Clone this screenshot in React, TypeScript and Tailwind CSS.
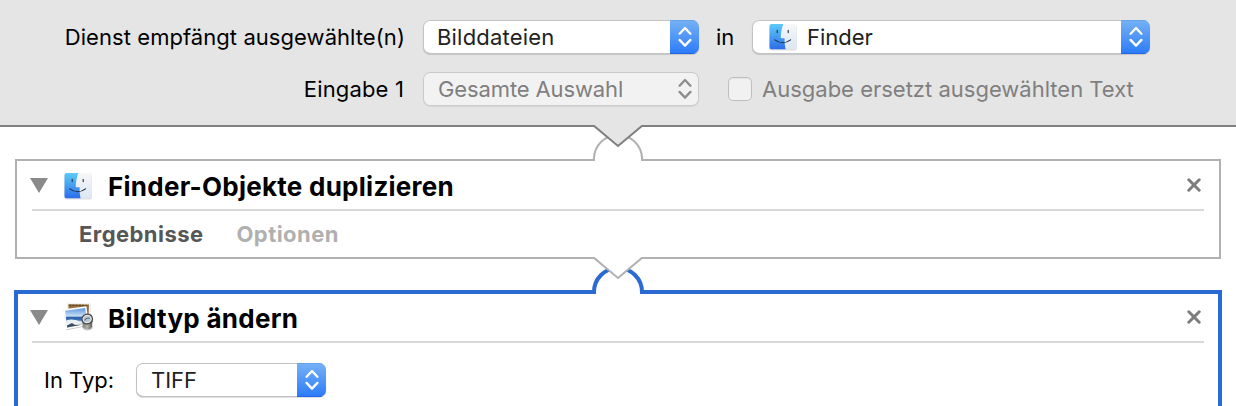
import type { ReactNode } from "react";

function FinderIcon() {
  return (
    <svg width="30" height="28" viewBox="0 0 30 28" className="shrink-0">
      <defs>
        <linearGradient id="finderLeft" x1="0" y1="0" x2="0" y2="1">
          <stop offset="0" stopColor="#5dcbf8" />
          <stop offset="0.5" stopColor="#459df0" />
          <stop offset="1" stopColor="#2c6bea" />
        </linearGradient>
        <linearGradient id="finderRight" x1="0" y1="0" x2="0" y2="1">
          <stop offset="0" stopColor="#f7f7f8" />
          <stop offset="1" stopColor="#dde6f3" />
        </linearGradient>
      </defs>
      <rect x="1.2" y="2" width="27.6" height="25.4" rx="2" fill="#000" opacity="0.13" />
      <rect x="1.5" y="1" width="27" height="25.3" rx="2" fill="url(#finderRight)" />
      <path
        d="M3.5 1H15.3C13.7 5.3 12.9 9.7 12.7 14.6Q12.7 15.2 13.3 15.2H16.6C16.5 19.3 16.8 22.8 17.6 26.3H3.5Q1.5 26.3 1.5 24.3V3Q1.5 1 3.5 1Z"
        fill="url(#finderLeft)"
      />
      <path d="M9.2 7.4V9.6M20.2 7.4V9.6" stroke="#1d2b3d" strokeWidth="1.1" strokeLinecap="round" />
      <path d="M6.8 16.9Q14.6 22.6 22.6 16.9" fill="none" stroke="#1d2b3d" strokeWidth="1.1" strokeLinecap="round" />
    </svg>
  );
}

function PreviewIcon() {
  return (
    <svg width="34" height="32" viewBox="0 0 34 32" className="shrink-0">
      <defs>
        <linearGradient id="photoSky" x1="0" y1="0" x2="0" y2="1">
          <stop offset="0" stopColor="#5c98df" />
          <stop offset="0.42" stopColor="#c9dff4" />
          <stop offset="0.48" stopColor="#2f5fa8" />
          <stop offset="0.62" stopColor="#3f74b8" />
          <stop offset="0.72" stopColor="#e6eef5" />
          <stop offset="1" stopColor="#8fa6b5" />
        </linearGradient>
        <linearGradient id="loupe" x1="0" y1="0" x2="1" y2="0">
          <stop offset="0" stopColor="#777671" />
          <stop offset="0.45" stopColor="#b5b3ab" />
          <stop offset="1" stopColor="#5a5853" />
        </linearGradient>
      </defs>
      <path d="M5.5 3L28.5 3.3L28 25L5 25Z" fill="#000" opacity="0.2" />
      <path d="M4.8 1.8L28.4 2.1L27.8 24L5 23Z" fill="#f5f3ee" />
      <path d="M6.3 3.2L27 3.5L26.4 20L7 20Z" fill="#94703f" />
      <path d="M7.3 4.3L26.4 4.6" stroke="#5d431f" strokeWidth="1.3" strokeDasharray="2 1.2" />
      <path d="M1.6 9.1L25 6L27.2 24.5L4.4 29.3Z" fill="#000" opacity="0.25" />
      <path d="M1.4 8.2L24.5 5.2L27 24L4 28.5Z" fill="#fdfdfd" />
      <path d="M3.1 9.7L23.2 7L25.3 22.5L5.1 26.4Z" fill="url(#photoSky)" />
      <path d="M4.4 19.5Q12 17 19.5 21.5L14 24.7L5.1 26.4Z" fill="#eaf1f5" />
      <path d="M5 24.6L10 21.9L12.5 23.7L18.5 23.9L5.1 26.4Z" fill="#3c4f5c" />
      <ellipse cx="25.6" cy="26" rx="5.4" ry="3.6" fill="#000" opacity="0.2" />
      <path d="M20.2 18.5L20.9 26Q22.1 28.4 25.6 28.4T30 25.5L30.8 18Z" fill="url(#loupe)" />
      <ellipse cx="25.2" cy="18" rx="5.2" ry="4.8" transform="rotate(-15 25.2 18)" fill="#b9c7d4" stroke="#4c4c4a" strokeWidth="1.5" />
      <ellipse cx="25.2" cy="18" rx="4" ry="3.6" transform="rotate(-15 25.2 18)" fill="none" stroke="#f2f2f0" strokeWidth="0.8" />
      <path d="M22.5 19.5Q24.6 16 27.8 17.4" fill="none" stroke="#52687b" strokeWidth="1.1" />
    </svg>
  );
}

function Chevrons({ className }: { className: string }) {
  return (
    <svg width="14" height="22" viewBox="0 0 14 22" fill="none" strokeWidth="2.3" strokeLinecap="round" strokeLinejoin="round" className={className}>
      <path d="M1.6 7.7L7 2L12.4 7.7M1.6 13.9L7 19.6L12.4 13.9" />
    </svg>
  );
}

function Popup({ className, disabled, children }: { className: string; disabled?: boolean; children: ReactNode }) {
  return (
    <div
      className={`flex h-[34px] shrink-0 overflow-hidden rounded-[7px] ${
        disabled
          ? "bg-[#f2f2f2] text-[#7f7f7f] shadow-[inset_0_0_0_1px_#cacaca,0_1px_1px_rgba(0,0,0,0.06)]"
          : "bg-white text-[#222] shadow-[inset_0_0_0_1px_#c3c3c3,inset_0_-1px_0_#aaa,0_1px_1px_rgba(0,0,0,0.14)]"
      } ${className}`}
    >
      <div className="flex flex-1 items-center whitespace-nowrap pl-[14px]">{children}</div>
      {disabled ? (
        <div className="flex w-[29px] items-center justify-center">
          <Chevrons className="stroke-[#8c8c8c]" />
        </div>
      ) : (
        <div className="flex w-[29px] items-center justify-center bg-linear-to-b from-[#76b1f5] to-[#2a7af8] shadow-[inset_0_1px_0_#67a4ee,inset_0_-1px_0_#1f66ea]">
          <Chevrons className="stroke-white" />
        </div>
      )}
    </div>
  );
}

function CardHeader({ icon, title, iconClass }: { icon: ReactNode; title: string; iconClass: string }) {
  return (
    <div className="mx-[15px] flex h-[50px] items-center border-b-2 border-[#d8d8d8]">
      <svg width="18" height="15" viewBox="0 0 18 15" className="-ml-[2px] shrink-0">
        <path d="M0 0H18L9 15Z" fill="#8a8a8a" />
      </svg>
      <div className={`flex shrink-0 ${iconClass}`}>{icon}</div>
      <h2 className="mt-[3px] flex-1 whitespace-nowrap text-[26px] leading-[34px] font-bold tracking-[0.26px] text-black">{title}</h2>
      <svg width="14" height="14" viewBox="0 0 14 14" className="mr-[3px] shrink-0">
        <path d="M1.8 1.8L12.2 12.2M12.2 1.8L1.8 12.2" stroke="#7d7d7d" strokeWidth="3" strokeLinecap="round" />
      </svg>
    </div>
  );
}

export default function App() {
  return (
    <div className="flex h-[406px] w-[1236px] flex-col overflow-hidden bg-white font-['Inter',sans-serif] text-[22px] leading-[34px] text-black">
      <header className="relative z-20 flex h-[127px] shrink-0 flex-col gap-[18px] border-b-2 border-[#808080] bg-[#e5e5e5] pt-[20px]">
        <div className="flex h-[34px]">
          <div className="w-[405px] whitespace-nowrap text-right tracking-[0.06px]">Dienst empfängt ausgewählte(n)</div>
          <Popup className="ml-[18px] w-[276px]">
            <span className="tracking-[0.2px]">Bilddateien</span>
          </Popup>
          <span className="w-[53px] pl-[17px]">in</span>
          <Popup className="w-[398px]">
            <span className="ml-[2px] flex w-[39px]">
              <FinderIcon />
            </span>
            <span>Finder</span>
          </Popup>
        </div>
        <div className="flex h-[34px]">
          <div className="w-[404px] whitespace-nowrap text-right tracking-[0.15px]">Eingabe 1</div>
          <Popup className="ml-[19px] w-[276px]" disabled>
            <span className="ml-px tracking-[-0.12px]">Gesamte Auswahl</span>
          </Popup>
          <label className="ml-[29px] flex items-center text-[#7f7f7f]">
            <span className="mr-[10px] size-[24px] rounded-[5px] border border-[#bfbfbf] bg-[#f1f1f1] shadow-[inset_0_1px_1px_rgba(0,0,0,0.06)]" />
            <span className="whitespace-nowrap">Ausgabe ersetzt ausgewählten Text</span>
          </label>
        </div>
        <svg width="56" height="24" viewBox="0 0 56 24" className="absolute top-[125px] left-[590px]">
          <path d="M4.2 0H51.8V1L28 21L4.2 1Z" fill="#e5e5e5" />
          <path d="M3.8 0.7L28 21L52.2 0.7" fill="none" stroke="#808080" strokeWidth="2" />
        </svg>
      </header>

      <main className="flex flex-col">
        <section className="relative z-10 mx-[15px] mt-[32px] h-[100px] border-2 border-[#b1b1b1] bg-white">
          <CardHeader icon={<FinderIcon />} iconClass="ml-[15px] mt-[2px] w-[45px]" title="Finder-Objekte duplizieren" />
          <div className="ml-[62px] flex gap-[33px] pt-[6px] font-bold tracking-[0.44px]">
            <span className="text-[#565656]">Ergebnisse</span>
            <span className="text-[#b0b0b0]">Optionen</span>
          </div>
          <svg width="56" height="30" viewBox="0 0 56 30" className="absolute -top-[28px] left-[573px]">
            <path d="M4.5 30V26A23.8 23.8 0 0 1 51.5 26V30Z" fill="#fff" />
            <path d="M3.9 28V26A24.1 24.1 0 0 1 52.1 26V28" fill="none" stroke="#b1b1b1" strokeWidth="2" />
          </svg>
          <svg width="56" height="24" viewBox="0 0 56 24" className="absolute top-[96px] left-[573px]">
            <path d="M4.2 0H51.8V1L28 21L4.2 1Z" fill="#fff" />
            <path d="M3.8 0.7L28 21L52.2 0.7" fill="none" stroke="#b1b1b1" strokeWidth="2" />
          </svg>
        </section>

        <section className="relative mx-[14px] mt-[31px] h-[124px] border-4 border-[#2a6ad3] bg-white">
          <div className="-mx-px -mt-px">
            <CardHeader icon={<PreviewIcon />} iconClass="ml-[14px] w-[46px]" title="Bildtyp ändern" />
          </div>
          <div className="mt-[20px] ml-[26px] flex">
            <span className="w-[92px]">In Typ:</span>
            <Popup className="w-[190px]">
              <span className="ml-px">TIFF</span>
            </Popup>
          </div>
          <svg width="60" height="32" viewBox="0 0 60 32" className="absolute -top-[30px] left-[570px]">
            <path d="M6 32V28A24 24 0 0 1 54 28V32Z" fill="#fff" />
            <path d="M6 30V28A24 24 0 0 1 54 28V30" fill="none" stroke="#2a6ad3" strokeWidth="4" />
          </svg>
        </section>
      </main>
    </div>
  );
}
